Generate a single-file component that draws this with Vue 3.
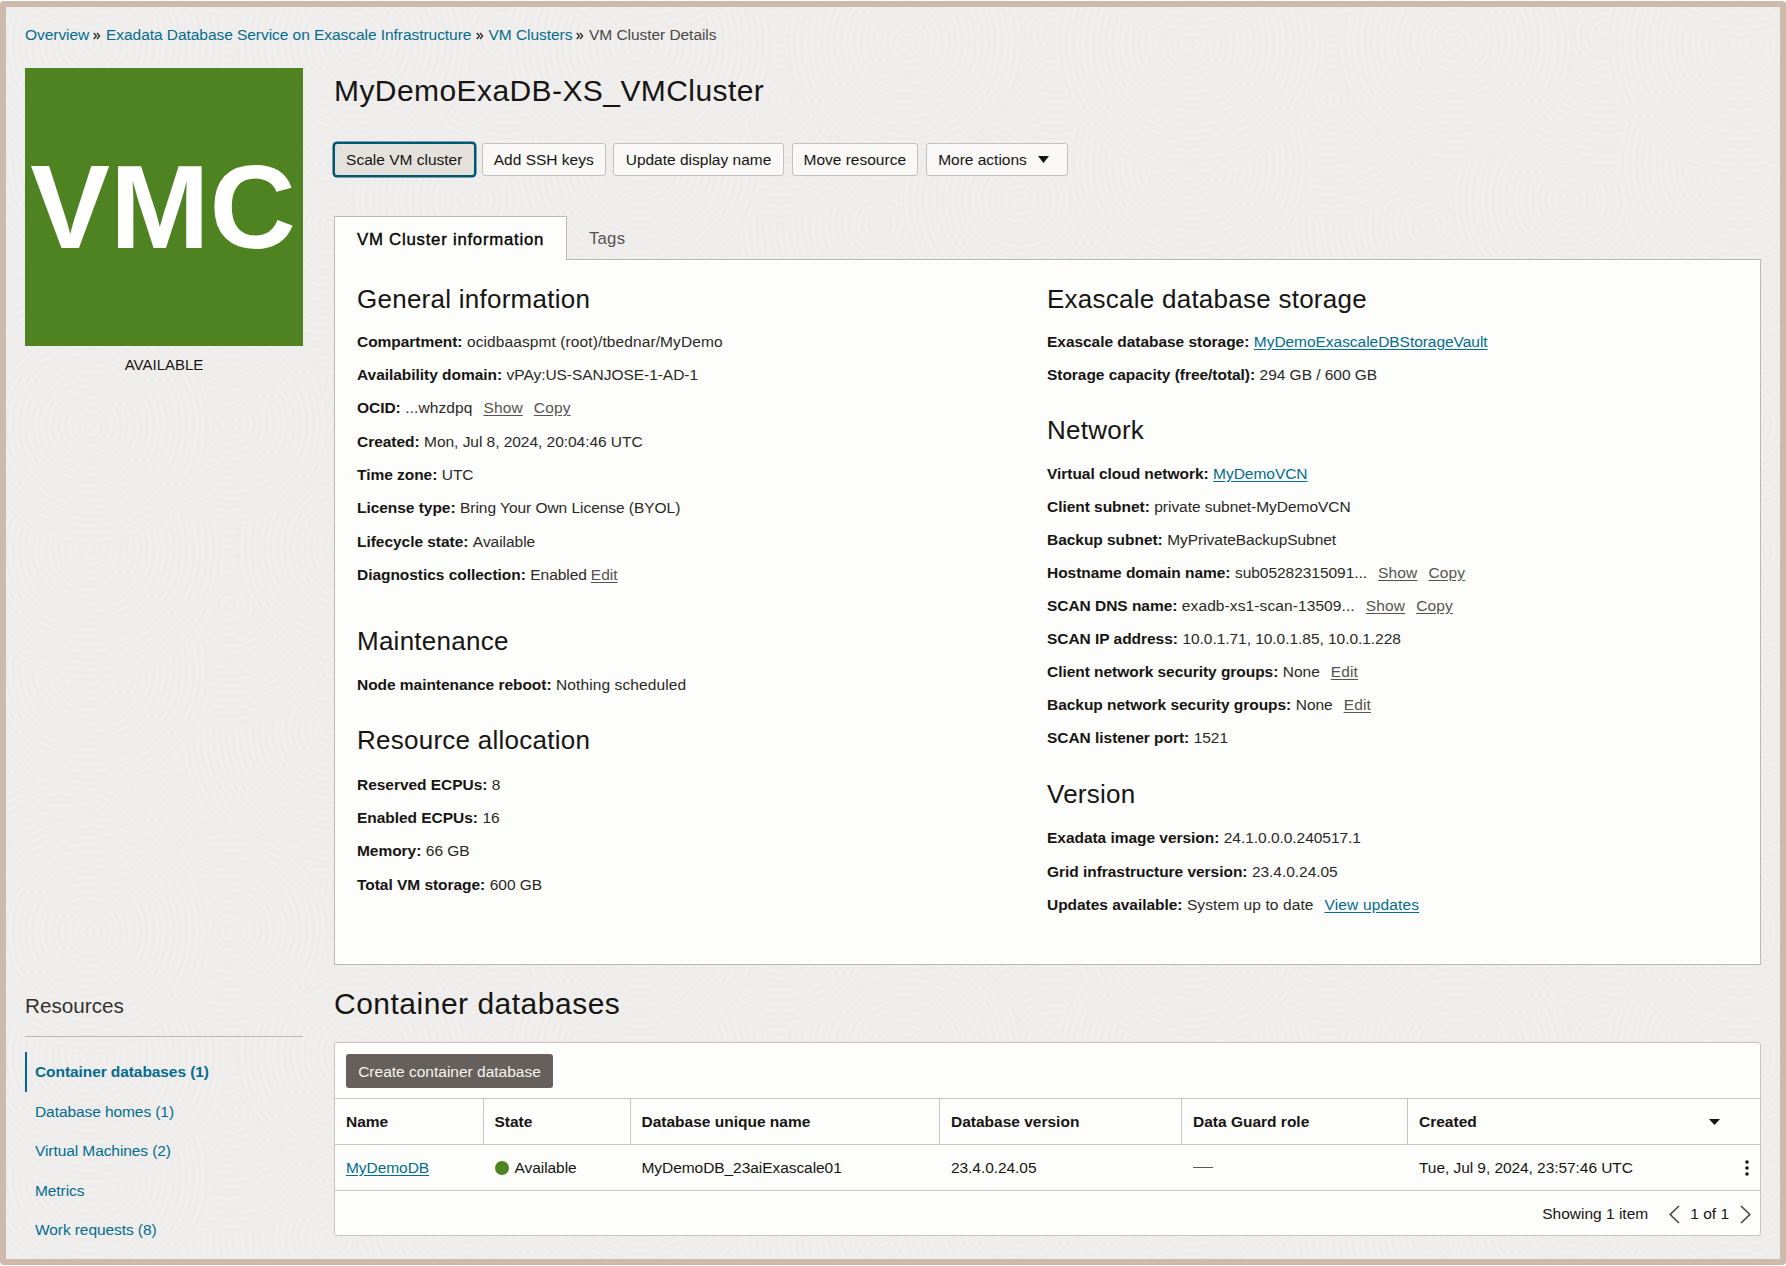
<script setup>
const crumbs = [
  { text: 'Overview', w: 64 },
  { text: 'Exadata Database Service on Exascale Infrastructure', w: 365.5 },
  { text: 'VM Clusters', w: 83.5 },
]

const leftSections = [
  {
    title: 'General information',
    cls: 'general',
    rows: [
      { label: 'Compartment:', value: 'ocidbaaspmt (root)/tbednar/MyDemo', wide: true },
      { label: 'Availability domain:', value: 'vPAy:US-SANJOSE-1-AD-1' },
      { label: 'OCID:', value: '...whzdpq', actions: ['Show', 'Copy'], wide: true },
      { label: 'Created:', value: 'Mon, Jul 8, 2024, 20:04:46 UTC' },
      { label: 'Time zone:', value: 'UTC' },
      { label: 'License type:', value: 'Bring Your Own License (BYOL)' },
      { label: 'Lifecycle state:', value: 'Available' },
      { label: 'Diagnostics collection:', value: 'Enabled', actions: ['Edit'], tight: true },
    ],
  },
  {
    title: 'Maintenance',
    cls: 'maintenance',
    rows: [{ label: 'Node maintenance reboot:', value: 'Nothing scheduled', wide: true }],
  },
  {
    title: 'Resource allocation',
    cls: 'resource',
    rows: [
      { label: 'Reserved ECPUs:', value: '8' },
      { label: 'Enabled ECPUs:', value: '16' },
      { label: 'Memory:', value: '66 GB' },
      { label: 'Total VM storage:', value: '600 GB' },
    ],
  },
]

const rightSections = [
  {
    title: 'Exascale database storage',
    cls: 'general',
    rows: [
      { label: 'Exascale database storage:', link: 'MyDemoExascaleDBStorageVault' },
      { label: 'Storage capacity (free/total):', value: '294 GB / 600 GB' },
    ],
  },
  {
    title: 'Network',
    cls: 'network',
    rows: [
      { label: 'Virtual cloud network:', link: 'MyDemoVCN' },
      { label: 'Client subnet:', value: 'private subnet-MyDemoVCN' },
      { label: 'Backup subnet:', value: 'MyPrivateBackupSubnet' },
      { label: 'Hostname domain name:', value: 'sub05282315091...', actions: ['Show', 'Copy'] },
      { label: 'SCAN DNS name:', value: 'exadb-xs1-scan-13509...', actions: ['Show', 'Copy'], wide: true },
      { label: 'SCAN IP address:', value: '10.0.1.71, 10.0.1.85, 10.0.1.228' },
      { label: 'Client network security groups:', value: 'None', actions: ['Edit'] },
      { label: 'Backup network security groups:', value: 'None', actions: ['Edit'] },
      { label: 'SCAN listener port:', value: '1521' },
    ],
  },
  {
    title: 'Version',
    cls: 'version',
    rows: [
      { label: 'Exadata image version:', value: '24.1.0.0.0.240517.1' },
      { label: 'Grid infrastructure version:', value: '23.4.0.24.05' },
      { label: 'Updates available:', value: 'System up to date', trailingLink: 'View updates', wide: true },
    ],
  },
]

const columns = [leftSections, rightSections]

const resources = [
  'Container databases (1)',
  'Database homes (1)',
  'Virtual Machines (2)',
  'Metrics',
  'Work requests (8)',
]

// Ring clusters of the repeating page texture, bottom to top.
const tileW = 550
const tileH = 506
const discs = [
  [440, 380, 150],
  [230, 374, 150],
  [60, 374, 120],
  [330, 225, 150],
  [470, 200, 120],
  [230, 100, 120],
  [505, 35, 135],
  [90, 164, 122],
  [355, 42, 118],
  [90, 44, 134],
  [230, 424, 100],
  [90, 426, 120],
]
const rings = []
for (const [x, y, r] of discs) {
  for (const dx of [-tileW, 0, tileW]) {
    for (const dy of [-tileH, 0, tileH]) {
      const cx = x + dx
      const cy = y + dy
      if (cx + r > 0 && cx - r < tileW && cy + r > 0 && cy - r < tileH) rings.push({ cx, cy, r })
    }
  }
}
</script>

<template>
  <div class="frame">
    <svg class="texture" width="1774" height="1252" aria-hidden="true">
      <defs>
        <radialGradient id="ring" gradientUnits="userSpaceOnUse" cx="0" cy="0" r="6.6" spreadMethod="repeat">
          <stop offset="0" stop-color="#efeeec" />
          <stop offset="0.3" stop-color="#f0efee" />
          <stop offset="0.65" stop-color="#ecebe9" />
          <stop offset="1" stop-color="#efeeec" />
        </radialGradient>
        <pattern id="tile" patternUnits="userSpaceOnUse" x="-6" y="-7" :width="tileW" :height="tileH">
          <rect :width="tileW" :height="tileH" fill="#efeeec" />
          <circle
            v-for="(c, i) in rings"
            :key="i"
            :r="c.r"
            :transform="`translate(${c.cx} ${c.cy})`"
            fill="url(#ring)"
          />
        </pattern>
      </defs>
      <rect width="1774" height="1252" fill="url(#tile)" />
    </svg>

    <div class="page">
      <nav class="crumbs">
        <template v-for="c in crumbs" :key="c.text">
          <a :style="{ width: c.w + 'px' }">{{ c.text }}</a>
          <svg class="sep" width="8" height="8" viewBox="0 0 8 8">
            <path d="M.8 1 3.4 4 .8 7M4 1 6.6 4 4 7" fill="none" stroke="#33312f" stroke-width="1.4" />
          </svg>
        </template>
        <span>VM Cluster Details</span>
      </nav>

      <div class="layout">
        <aside>
          <div class="badge">VMC</div>
          <div class="status">AVAILABLE</div>
        </aside>
        <main>
          <h1 class="title">MyDemoExaDB-XS_VMCluster</h1>
          <div class="buttons">
            <button class="btn focused w-scale">Scale VM cluster</button>
            <button class="btn w-ssh">Add SSH keys</button>
            <button class="btn w-update">Update display name</button>
            <button class="btn w-move">Move resource</button>
            <button class="btn w-more">
              More actions
              <svg width="11" height="7" viewBox="0 0 11 7"><path d="M0 0H11L5.5 7Z" fill="#161513" /></svg>
            </button>
          </div>
          <div class="tabs">
            <div class="tab active">VM Cluster information</div>
            <div class="tab">Tags</div>
          </div>
          <div class="panel">
            <div v-for="(col, ci) in columns" :key="ci" class="col">
              <section v-for="s in col" :key="s.title" :class="s.cls">
                <h2>{{ s.title }}</h2>
                <div v-for="r in s.rows" :key="r.label" class="row" :class="{ wide: r.wide }">
                  <b>{{ r.label }}</b>
                  <a v-if="r.link" class="link">{{ r.link }}</a>
                  <span v-else>{{ r.value }}</span>
                  <a v-if="r.trailingLink" class="link action">{{ r.trailingLink }}</a>
                  <a v-for="a in r.actions" :key="a" class="action" :class="{ tight: r.tight }">{{ a }}</a>
                </div>
              </section>
            </div>
          </div>
        </main>
      </div>

      <div class="layout lower">
        <aside>
          <h3>Resources</h3>
          <ul>
            <li v-for="(r, i) in resources" :key="r" :class="{ current: i === 0 }">{{ r }}</li>
          </ul>
        </aside>
        <main>
          <h1 class="subtitle">Container databases</h1>
          <div class="table">
            <div class="toolbar"><button class="create">Create container database</button></div>
            <div class="tr head">
              <div>Name</div>
              <div>State</div>
              <div>Database unique name</div>
              <div>Database version</div>
              <div>Data Guard role</div>
              <div class="created">
                Created
                <svg width="11" height="6" viewBox="0 0 11 6"><path d="M0 0H11L5.5 6Z" fill="#161513" /></svg>
              </div>
            </div>
            <div class="tr body">
              <div><a class="link">MyDemoDB</a></div>
              <div><i class="dot"></i>Available</div>
              <div>MyDemoDB_23aiExascale01</div>
              <div>23.4.0.24.05</div>
              <div><i class="dash"></i></div>
              <div class="created">
                Tue, Jul 9, 2024, 23:57:46 UTC
                <svg class="kebab" width="4" height="16" viewBox="0 0 4 16" fill="#161513">
                  <circle cx="2" cy="2" r="1.8" />
                  <circle cx="2" cy="8" r="1.8" />
                  <circle cx="2" cy="14" r="1.8" />
                </svg>
              </div>
            </div>
            <div class="footer">
              <span class="showing">Showing 1 item</span>
              <svg width="11" height="19" viewBox="0 0 11 19"><path d="M10 1 1.2 9.5 10 18" /></svg>
              <span class="pages">1 of 1</span>
              <svg width="11" height="19" viewBox="0 0 11 19"><path d="M1 1 9.8 9.5 1 18" /></svg>
            </div>
          </div>
        </main>
      </div>
    </div>
  </div>
</template>

<style>
body {
  background: #fff;
}
</style>

<style scoped>
* {
  box-sizing: border-box;
}
.frame {
  position: relative;
  width: 1786px;
  height: 1264px;
  margin-top: 1px;
  border: 6px solid #cdbaaa;
  border-radius: 4px;
  background: #efeeec;
  font-family: 'Liberation Sans', Arial, sans-serif;
  font-size: 15.5px;
  color: #161513;
  overflow: hidden;
}
.texture {
  position: absolute;
  left: 0;
  top: 0;
}
.page {
  position: relative;
  padding: 18px 19px 0 19px;
}
h1,
h2,
h3,
ul {
  margin: 0;
  padding: 0;
  font-weight: 400;
  list-style: none;
}
.crumbs {
  display: flex;
  align-items: center;
  height: 20px;
  line-height: 20px;
  letter-spacing: -0.05px;
  white-space: nowrap;
  color: #4a4846;
}
.crumbs a {
  color: #046c8f;
}
.crumbs .sep {
  margin: 2px 5px 0 4px;
}
.layout {
  display: grid;
  grid-template-columns: 278px 1427px;
  column-gap: 31px;
  margin-top: 23px;
}
.badge {
  display: flex;
  align-items: center;
  justify-content: center;
  height: 278px;
  background: #4f8321;
  color: #fff;
  font-size: 119.5px;
  font-weight: 700;
  line-height: 278px;
  padding-right: 2px;
  padding-bottom: 1px;
}
.status {
  margin-top: 9px;
  text-align: center;
  line-height: 20px;
  letter-spacing: 0;
  font-size: 15px;
}
.title,
.subtitle {
  font-size: 30px;
  line-height: 40px;
  letter-spacing: 0.42px;
  white-space: nowrap;
}
.subtitle {
  letter-spacing: 0.5px;
}
.title {
  margin-top: 3px;
}
.buttons {
  display: flex;
  gap: 7.5px;
  margin-top: 32px;
}
.btn {
  display: flex;
  align-items: center;
  justify-content: center;
  height: 33px;
  padding: 0;
  border: 1px solid #c4c0bc;
  border-radius: 3px;
  background: #f9f8f6;
  font: inherit;
  color: #161513;
  white-space: nowrap;
}
.btn svg {
  margin-left: 11px;
}
.btn.focused {
  border-color: #00566e;
  background: #e4e0db;
  box-shadow: 0 0 0 1.5px #00566e;
}
.w-scale {
  width: 140.5px;
}
.w-ssh {
  width: 123.5px;
}
.w-update {
  width: 171px;
}
.w-move {
  width: 126.5px;
}
.w-more {
  width: 142px;
  padding-right: 6px;
}
.tabs {
  display: flex;
  height: 43px;
  margin-top: 40px;
}
.tab {
  padding-left: 22px;
  font-size: 16.8px;
  line-height: 45px;
  letter-spacing: 0.2px;
  color: #55524f;
}
.tab.active {
  position: relative;
  width: 233px;
  height: 44px;
  border: 1px solid #bbb8b5;
  border-bottom: 0;
  background: #fdfdfb;
  color: #000;
  letter-spacing: 0.75px;
  -webkit-text-stroke: 0.35px #000;
  white-space: nowrap;
}
.panel {
  display: grid;
  grid-template-columns: 690px 1fr;
  height: 706px;
  padding: 23px 0 0 22px;
  border: 1px solid #bbb8b5;
  background: #fdfdfb;
}
h2 {
  font-size: 26px;
  line-height: 32px;
  letter-spacing: 0.25px;
}
.row {
  display: flex;
  align-items: center;
  height: 33.33px;
  line-height: 20px;
  letter-spacing: -0.04px;
  white-space: nowrap;
}
.row b {
  margin-right: 4.5px;
}
.row.wide span {
  letter-spacing: 0.1px;
}
.row span {
  color: #2a2826;
}
.general h2 {
  margin-bottom: 10px;
}
.maintenance h2 {
  margin: 33px 0 11.5px;
}
.resource h2 {
  margin: 22.5px 0 12px;
}
.network h2 {
  margin: 22px 0 11.8px;
}
.network .row {
  height: 33.06px;
}
.version h2 {
  margin: 22.8px 0 11.9px;
}
.version .row {
  height: 33.5px;
}
.link {
  color: #046c8f;
  text-decoration: underline;
  text-underline-offset: 2px;
}
.action {
  margin-left: 11px;
  letter-spacing: 0.15px;
  text-decoration: underline;
  text-underline-offset: 2px;
}
.action:not(.link) {
  color: #565350;
}
.action.tight {
  margin-left: 4px;
  letter-spacing: 0;
}
.lower {
  margin-top: 19px;
}
h3 {
  height: 53px;
  padding-top: 7px;
  border-bottom: 1px solid #bbb8b5;
  font-size: 20.7px;
  line-height: 30px;
  color: #33312f;
}
ul {
  margin-top: 15px;
}
li {
  height: 39.5px;
  padding-left: 10px;
  line-height: 40.6px;
  letter-spacing: -0.08px;
  color: #046c8f;
}
li.current {
  padding-left: 8px;
  border-left: 2px solid #00688c;
  font-weight: 700;
}
.table {
  height: 194px;
  margin-top: 18px;
  border: 1px solid #c7c3c0;
  border-radius: 3px;
  background: #fdfdfb;
}
.toolbar {
  height: 55px;
  padding: 11px 0 0 11px;
}
.create {
  width: 207px;
  height: 34px;
  padding: 1px 0 0;
  border: 0;
  border-radius: 3px;
  background: #665f5b;
  color: #f5f3f1;
  font: inherit;
}
.tr {
  display: grid;
  grid-template-columns: 147.5px 147px 309.5px 242px 226px 1fr;
  border-top: 1px solid #c7c3c0;
}
.tr > div {
  display: flex;
  align-items: center;
  padding-left: 11px;
  white-space: nowrap;
}
.tr > div + div {
  padding-left: 12px;
}
.head {
  height: 46px;
  font-weight: 700;
}
.head > div + div {
  border-left: 1px solid #c7c3c0;
  padding-left: 11px;
}
.body {
  height: 46px;
  letter-spacing: -0.06px;
}
.created {
  justify-content: space-between;
}
.head .created {
  padding-right: 40px;
}
.body .created {
  padding-right: 11px;
}
.dot {
  width: 14px;
  height: 14px;
  margin-right: 6px;
  border-radius: 50%;
  background: #4f8321;
}
.dash {
  width: 20px;
  height: 1px;
  background: #5c5a58;
}
.footer {
  display: flex;
  align-items: center;
  justify-content: flex-end;
  height: 46px;
  padding-right: 9px;
  border-top: 1px solid #c7c3c0;
}
.footer svg {
  fill: none;
  stroke: #4a4543;
  stroke-width: 1.6;
  margin-top: 1px;
}
.showing {
  margin-right: 21px;
}
.pages {
  margin: 0 11px 0 10px;
}
</style>
